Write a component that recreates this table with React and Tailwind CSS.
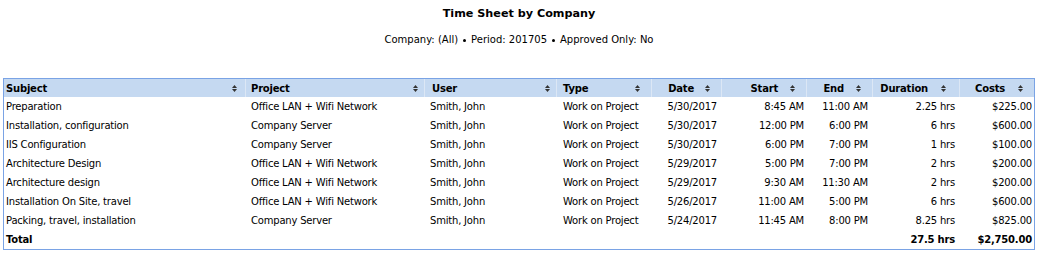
import React from "react";

const SortIcon = () => (
  <svg width="5" height="7" viewBox="0 0 5 7" className="shrink-0">
    <path d="M0 3 L2.5 0 L5 3 Z" fill="#333" />
    <path d="M0 4 L2.5 7 L5 4 Z" fill="#333" />
  </svg>
);

const cols = [
  { key: "subject", label: "Subject", align: "left" },
  { key: "project", label: "Project", align: "left" },
  { key: "user", label: "User", align: "left" },
  { key: "type", label: "Type", align: "left" },
  { key: "date", label: "Date", align: "right" },
  { key: "start", label: "Start", align: "right" },
  { key: "end", label: "End", align: "right" },
  { key: "duration", label: "Duration", align: "right" },
  { key: "costs", label: "Costs", align: "right" },
];

const rows = [
  ["Preparation", "Office LAN + Wifi Network", "Smith, John", "Work on Project", "5/30/2017", "8:45 AM", "11:00 AM", "2.25 hrs", "$225.00"],
  ["Installation, configuration", "Company Server", "Smith, John", "Work on Project", "5/30/2017", "12:00 PM", "6:00 PM", "6 hrs", "$600.00"],
  ["IIS Configuration", "Company Server", "Smith, John", "Work on Project", "5/30/2017", "6:00 PM", "7:00 PM", "1 hrs", "$100.00"],
  ["Architecture Design", "Office LAN + Wifi Network", "Smith, John", "Work on Project", "5/29/2017", "5:00 PM", "7:00 PM", "2 hrs", "$200.00"],
  ["Architecture design", "Office LAN + Wifi Network", "Smith, John", "Work on Project", "5/29/2017", "9:30 AM", "11:30 AM", "2 hrs", "$200.00"],
  ["Installation On Site, travel", "Office LAN + Wifi Network", "Smith, John", "Work on Project", "5/26/2017", "11:00 AM", "5:00 PM", "6 hrs", "$600.00"],
  ["Packing, travel, installation", "Company Server", "Smith, John", "Work on Project", "5/24/2017", "11:45 AM", "8:00 PM", "8.25 hrs", "$825.00"],
];

const cellPad = [
  "pl-[2px]",
  "pl-[5px]",
  "pl-[5px]",
  "pl-[6px]",
  "pr-[5px] justify-end",
  "pr-[3px] justify-end",
  "pr-[5px] justify-end",
  "pr-[5px] justify-end",
  "pr-[2px] justify-end",
];

const headPad = [
  "pl-[2px] pr-[8px] justify-between",
  "pl-[5px] pr-[6px] justify-between",
  "pl-[7px] pr-[6px] justify-between",
  "pl-[6px] pr-[11px] justify-between",
  "pr-[11px] justify-end gap-[11px]",
  "pr-[11px] justify-end gap-[12px]",
  "pr-[11px] justify-end gap-[12px]",
  "pr-[13px] justify-end gap-[13px]",
  "pr-[11px] justify-end gap-[13px]",
];

export default function App() {
  return (
    <div className="w-[1038px] h-[258px] bg-white text-black font-['DejaVu_Sans',sans-serif] px-[3px]">
      <div className="pt-[7px] text-center text-[11.2px] font-bold leading-[14px]">
        Time Sheet by Company
      </div>
      <div className="mt-[13px] text-center text-[10px] leading-[12px] flex justify-center items-center gap-[5px]">
        <span>Company: (All)</span>
        <span className="inline-block w-[3px] h-[3px] rounded-full bg-black"></span>
        <span>Period: 201705</span>
        <span className="inline-block w-[3px] h-[3px] rounded-full bg-black"></span>
        <span>Approved Only: No</span>
      </div>
      <div className="mt-[32px] border border-[#7aa3e5] w-[1032px]">
        <div className="grid grid-cols-[242px_179px_132px_95px_70px_85px_66px_87px_74px] text-[10px] tracking-[-0.2px]">
          {cols.map((c, i) => (
            <div
              key={c.key}
              className={`h-[18px] bg-[#c5d9f1] flex items-center font-bold ${headPad[i]} ${
                i < cols.length - 1 ? "border-r border-[#dce7f5]" : ""
              }`}
            >
              <span>{c.label}</span>
              <SortIcon />
            </div>
          ))}
          {rows.map((r, ri) =>
            r.map((v, ci) => (
              <div
                key={ri + "-" + ci}
                className={`h-[19px] flex items-center whitespace-nowrap ${cellPad[ci]}`}
              >
                {v}
              </div>
            ))
          )}
          {["Total", "", "", "", "", "", "", "27.5 hrs", "$2,750.00"].map((v, ci) => (
            <div
              key={"t-" + ci}
              className={`h-[19px] flex items-center font-bold whitespace-nowrap ${cellPad[ci]}`}
            >
              {v}
            </div>
          ))}
        </div>
      </div>
    </div>
  );
}
